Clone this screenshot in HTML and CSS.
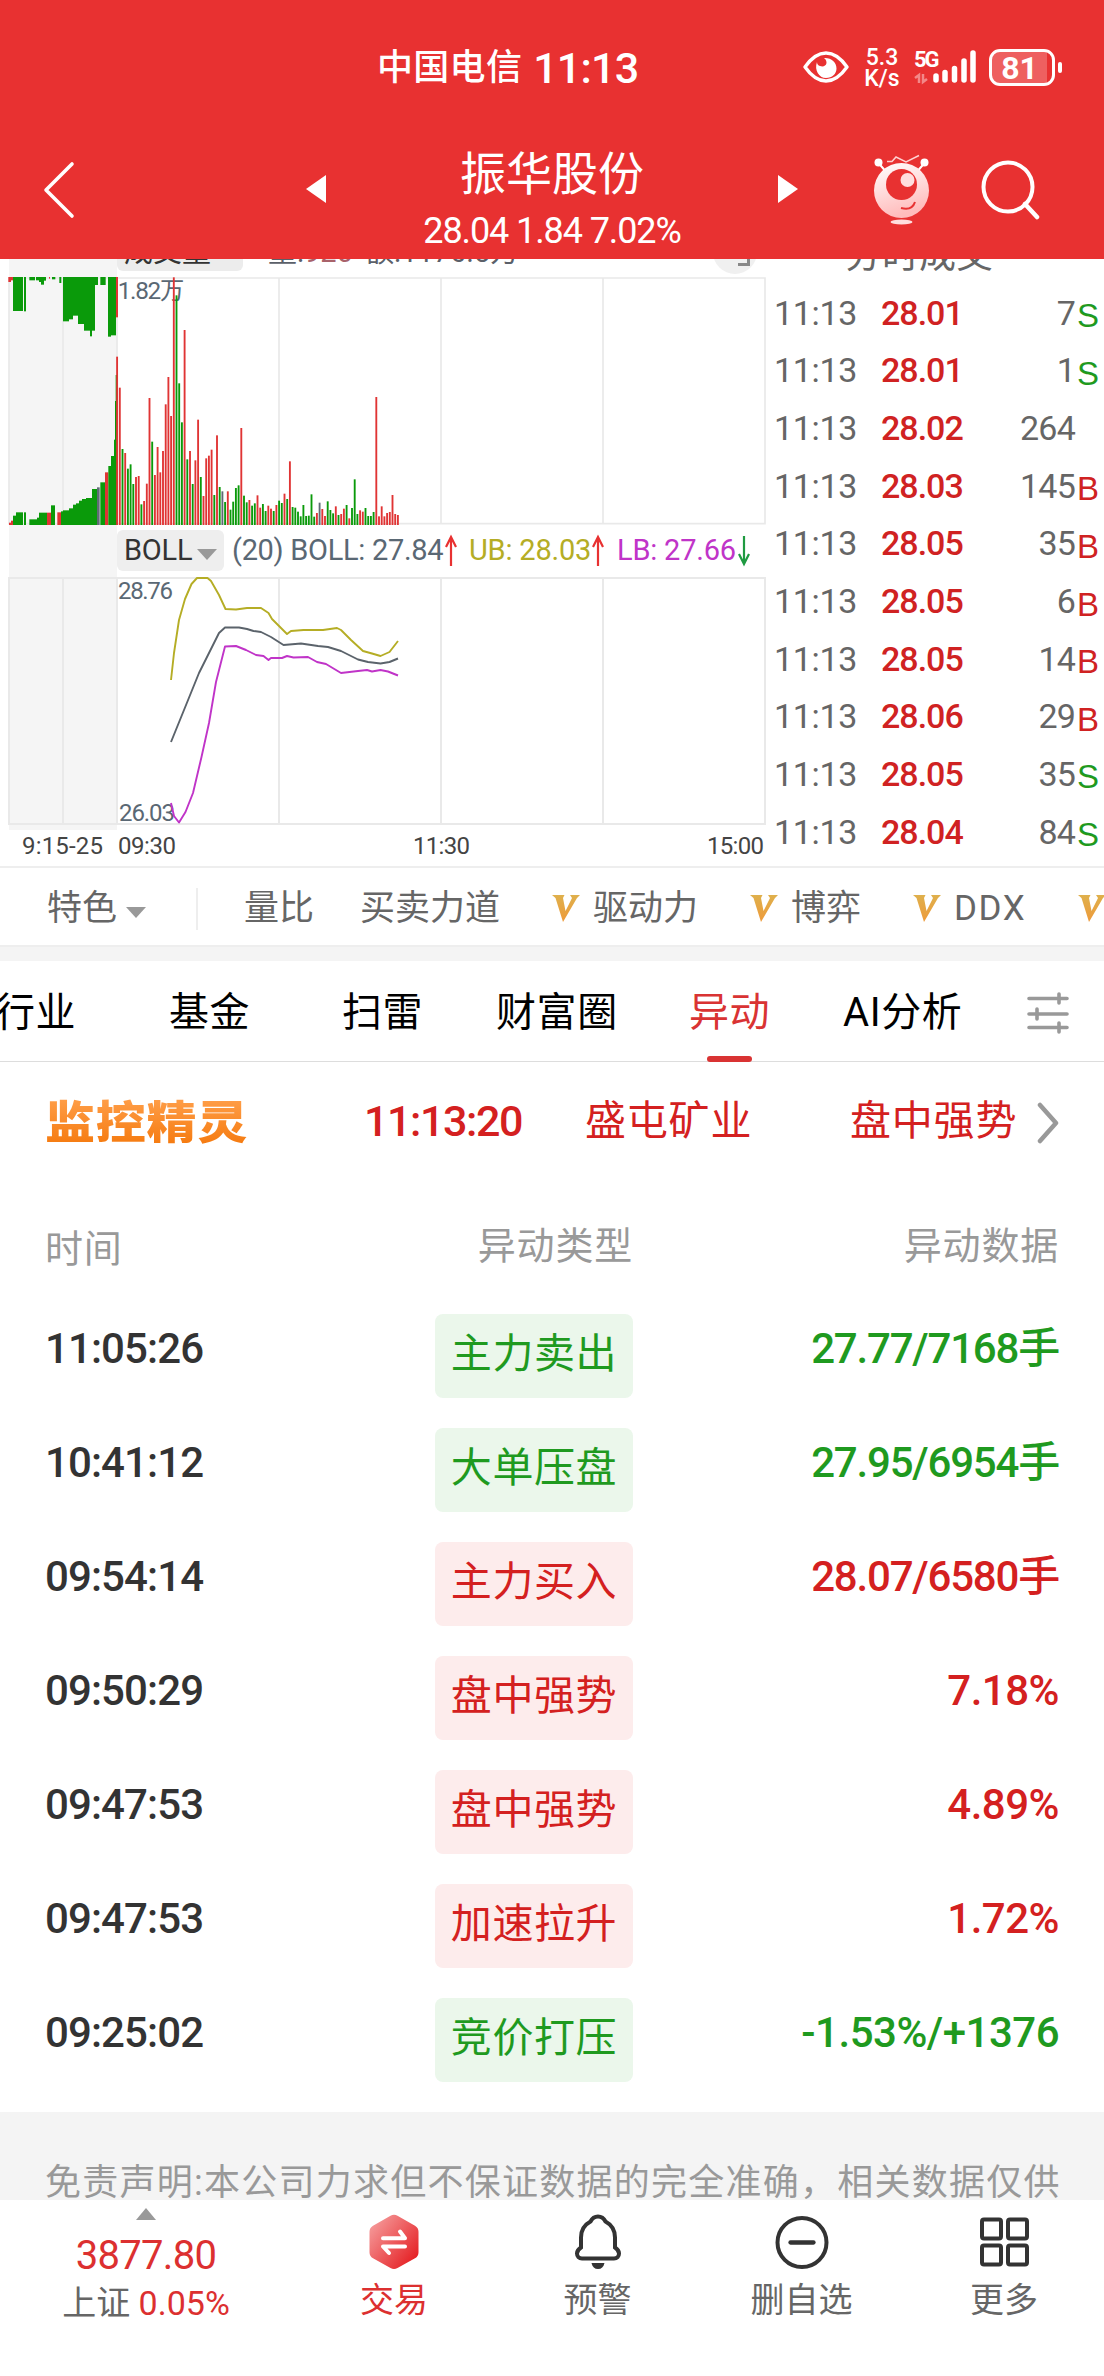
FILE: index.html
```html
<!DOCTYPE html>
<html lang="zh-CN">
<head>
    <meta charset="UTF-8">
    <meta name="viewport" content="width=device-width, initial-scale=1.0">
    <title>振华股份 - 异动</title>
    <link rel="stylesheet" href="styles.css">
</head>
<body>
    <header>
        <div class="status-bar">
            <div class="carrier">中国电信 <span class="clock">11:13</span></div>
            <div class="status-icons">
                <svg width="46" height="32" viewBox="0 0 46 32">
                    <path d="M2 16C9 6 16 2 23 2s14 4 21 14C37 26 30 30 23 30S9 26 2 16z" fill="none" stroke="#fff" stroke-width="3.4" stroke-linejoin="round"/>
                    <path d="M21 7c5 4 2 10-4 8-2-.6-3-2-3-4-3 8 2 16 9 16 6 0 10.500-4 10.500-9.500C33.500 11 28 6.500 21 7z" fill="#fff"/>
                </svg>
                <div class="speed"><span>5.3</span><span>K/s</span></div>
                <svg class="signal" width="64" height="36" viewBox="0 0 64 36">
                    <text x="0" y="17.500" class="net">5G</text>
                    <path d="M5 34V26l-4 3M9 25v8l4-3" stroke="#f38888" stroke-width="2.500" fill="none"/>
                    <g stroke="#fff" stroke-width="5.500" stroke-linecap="round">
                        <path d="M22 27v4M31 23.500v7.500M40.500 19.500V31M50 12v19M59 4v27"/>
                    </g>
                </svg>
                <div class="battery"><span>81</span></div>
            </div>
        </div>
        <div class="title-bar">
            <svg class="back" width="34" height="60" viewBox="0 0 34 60"><path d="M30 4L4 30l26 26" fill="none" stroke="#fff" stroke-width="3.600" stroke-linecap="round" stroke-linejoin="round"/></svg>
            <svg class="prev" width="20" height="28" viewBox="0 0 20 28"><path d="M20 0v28L0 14z" fill="#fff"/></svg>
            <div class="stock">
                <h1>振华股份</h1>
                <p>28.04 1.84 7.02%</p>
            </div>
            <svg class="next" width="20" height="28" viewBox="0 0 20 28"><path d="M0 0v28l20-14z" fill="#fff"/></svg>
            <svg class="robot" width="58" height="72" viewBox="0 0 58 72">
                <defs>
                    <linearGradient id="robotSkin" x1="0" y1="0" x2=".3" y2="1">
                        <stop offset="0" stop-color="#fff"/>
                        <stop offset="1" stop-color="#ffbcbc"/>
                    </linearGradient>
                </defs>
                <path d="M5.500 9l6 7M51.500 9l-6 7" stroke="#fff" stroke-width="2"/>
                <circle cx="5.500" cy="8.500" r="4" fill="#fff"/>
                <circle cx="51.500" cy="8.500" r="4" fill="#fff"/>
                <path d="M14 7.500h5l4-4.500 10 5 13-6.500" fill="none" stroke="#ffd0d0" stroke-width="1.500"/>
                <circle cx="28.500" cy="36.500" r="27.500" fill="url(#robotSkin)"/>
                <circle cx="28.500" cy="30.500" r="15.500" fill="#e83131"/>
                <circle cx="34.500" cy="26" r="7" fill="#ffdede"/>
                <path d="M28 54q11 3 14-6" fill="none" stroke="#e83131" stroke-width="2"/>
                <ellipse cx="28.500" cy="68" rx="11" ry="2.500" fill="#ffdede"/>
            </svg>
            <svg class="search" width="60" height="60" viewBox="0 0 60 60"><circle cx="27" cy="27" r="24.500" fill="none" stroke="#fff" stroke-width="4"/><path d="M44 44l12 13" stroke="#fff" stroke-width="4.500" stroke-linecap="round"/></svg>
        </div>
    </header>

    <section class="market">
        <div class="charts">
            <div class="chart-head">
                <span class="chart-name">成交量</span>
                <span class="vol">量:<b>920</b></span>
                <span class="amount">额:1176.5万</span>
                <span class="expand"></span>
            </div>
            <!-- volume chart: 9:15-9:25 auction on the left, one bar per minute after 9:30 -->
            <svg class="volume-chart" width="770" height="248" viewBox="0 81 2310 744">
                <path d="M27 81h324v744H27z" fill="#f5f5f5"/>
                <path d="M27 84h2268v737H27zM189 84v737M351 84v737M837 84v737M1323 84v737M1809 84v737" fill="none" stroke="#e9e9e9" stroke-width="5"/>
                <text x="353" y="147" textLength="200" class="scale-label">1.82万</text>
                <g id="auction"></g>
                <g id="volume"></g>
            </svg>
            <div class="boll-head">
                <span class="boll-name">BOLL<i class="down"></i></span>
                <span class="boll-mid">(20) BOLL: 27.84</span>
                <svg width="14" height="42" viewBox="0 0 14 42"><path d="M7 36V7M2 17L7 7l5 10" fill="none" stroke="#e83131" stroke-width="2.200"/></svg>
                <span class="boll-ub">UB: 28.03</span>
                <svg width="14" height="42" viewBox="0 0 14 42"><path d="M7 36V7M2 17L7 7l5 10" fill="none" stroke="#e83131" stroke-width="2.200"/></svg>
                <span class="boll-lb">LB: 27.66</span>
                <svg width="14" height="42" viewBox="0 0 14 42"><path d="M7 6v28M2 24l5 10 5-10" fill="none" stroke="#1f9a41" stroke-width="2.200"/></svg>
            </div>
            <svg class="boll-chart" width="770" height="290" viewBox="0 576 770 290">
                <path d="M9 576h108v254H9z" fill="#f5f5f5"/>
                <path d="M9 578h756v246H9zM63 578v246M117 578v246M279 578v246M441 578v246M603 578v246" fill="none" stroke="#e9e9e9" stroke-width="2"/>
                <g class="chart-text">
                    <text x="118" y="599" textLength="55" class="scale">28.76</text>
                    <text x="119" y="821" textLength="56" class="scale">26.03</text>
                    <text x="22" y="854" textLength="81">9:15-25</text>
                    <text x="118" y="854" textLength="58">09:30</text>
                    <text x="413" y="854" textLength="57">11:30</text>
                    <text x="707" y="854" textLength="57">15:00</text>
                </g>
                <g fill="none" stroke-width="1.900" stroke-linejoin="round">
                    <polyline stroke="#b5ad25" points="171,680 174,653 179,620 185,599 191.500,584 197,578 207.500,578 211,581 219,595 225.500,609 236,609.500 247,608 261,608 268.500,613 272,619 287,634 291,631 303.500,630 323,630 337,628 341,630 351,640 363,651 372,653.500 380.500,656 389.500,652 398,641"/>
                    <polyline stroke="#5b636b" points="171,742 184,710 199,673 208,655 219,633 225,627.500 239,627.500 247,629 253.500,631 261,632 271,637 283.500,645 301,643.500 318,646 328,647 341,651 358,659.500 368,662 380.500,663.500 389.500,662 398,658.500"/>
                    <polyline stroke="#c034c8" points="171,803 174,816 179,822.500 185.500,812 193,793 201.500,757 209,723 216,682 225,646.500 236,646 246,650 256,655 263.500,656 268.500,660 271,658 282,658 287,656 293.500,657.500 308,657 317,662 326,664 341,673 358,671 367,670 372,671.500 380.500,670 388,671.500 398,675.500"/>
                </g>
            </svg>
        </div>
        <div class="deals">
            <div class="deals-head"><span>分时成交</span></div>
            <ul>
                <li><span>11:13</span><b>28.01</b><em>7</em><i class="sell">S</i></li>
                <li><span>11:13</span><b>28.01</b><em>1</em><i class="sell">S</i></li>
                <li><span>11:13</span><b>28.02</b><em>264</em><i></i></li>
                <li><span>11:13</span><b>28.03</b><em>145</em><i class="buy">B</i></li>
                <li><span>11:13</span><b>28.05</b><em>35</em><i class="buy">B</i></li>
                <li><span>11:13</span><b>28.05</b><em>6</em><i class="buy">B</i></li>
                <li><span>11:13</span><b>28.05</b><em>14</em><i class="buy">B</i></li>
                <li><span>11:13</span><b>28.06</b><em>29</em><i class="buy">B</i></li>
                <li><span>11:13</span><b>28.05</b><em>35</em><i class="sell">S</i></li>
                <li><span>11:13</span><b>28.04</b><em>84</em><i class="sell">S</i></li>
            </ul>
        </div>
    </section>

    <svg width="0" height="0" class="defs">
        <defs>
            <linearGradient id="gold" x1="0" y1="0" x2="0" y2="1">
                <stop offset="0" stop-color="#dfb04c"/>
                <stop offset="1" stop-color="#ee9a3a"/>
            </linearGradient>
            <symbol id="vip" viewBox="0 0 28 27">
                <path d="M0 0h12.500l-1.500 3 2.500 13L20 3l-2-3h10l-3 3-14 24L3.500 3z" fill="url(#gold)"/>
            </symbol>
        </defs>
    </svg>

    <div class="features">
        <span class="special">特色<i class="down"></i></span>
        <span class="divider"></span>
        <span>量比</span>
        <span>买卖力道</span>
        <span><svg class="vip"><use href="#vip"/></svg>驱动力</span>
        <span><svg class="vip"><use href="#vip"/></svg>博弈</span>
        <span class="ddx"><svg class="vip"><use href="#vip"/></svg>DDX</span>
        <span><svg class="vip"><use href="#vip"/></svg></span>
    </div>

    <nav class="tabs">
        <a>行业</a>
        <a>基金</a>
        <a>扫雷</a>
        <a>财富圈</a>
        <a class="active">异动</a>
        <a>AI分析</a>
        <svg width="42" height="42" viewBox="0 0 42 42"><path d="M2 6.500h38M2 22h38M2 35.500h38M32 2v9M10 17v10M32 31v9" stroke="#999" stroke-width="3.600" stroke-linecap="round"/></svg>
    </nav>

    <div class="monitor">
        <strong>监控精灵</strong>
        <span class="num">11:13:20</span>
        <span>盛屯矿业</span>
        <span>盘中强势</span>
        <svg width="22" height="42" viewBox="0 0 22 42"><path d="M3 3l16 18L3 39" fill="none" stroke="#999" stroke-width="4.500" stroke-linecap="round" stroke-linejoin="round"/></svg>
    </div>

    <div class="moves">
        <div class="row head"><span class="time">时间</span><span class="type">异动类型</span><span class="data">异动数据</span></div>
        <div class="row"><span class="time">11:05:26</span><span class="tag green">主力卖出</span><span class="data green-text">27.77/7168手</span></div>
        <div class="row"><span class="time">10:41:12</span><span class="tag green">大单压盘</span><span class="data green-text">27.95/6954手</span></div>
        <div class="row"><span class="time">09:54:14</span><span class="tag red">主力买入</span><span class="data red-text">28.07/6580手</span></div>
        <div class="row"><span class="time">09:50:29</span><span class="tag red">盘中强势</span><span class="data percent red-text">7.18%</span></div>
        <div class="row"><span class="time">09:47:53</span><span class="tag red">盘中强势</span><span class="data percent red-text">4.89%</span></div>
        <div class="row"><span class="time">09:47:53</span><span class="tag red">加速拉升</span><span class="data percent red-text">1.72%</span></div>
        <div class="row"><span class="time">09:25:02</span><span class="tag green">竞价打压</span><span class="data percent green-text">-1.53%/+1376</span></div>
    </div>

    <div class="disclaimer">免责声明:本公司力求但不保证数据的完全准确，相关数据仅供</div>

    <footer>
        <div class="index">
            <i class="up"></i>
            <b>3877.80</b>
            <p>上证 <span>0.05%</span></p>
        </div>
        <a class="trade">
            <svg width="56" height="56" viewBox="0 0 56 56">
                <defs>
                    <linearGradient id="hex" x1="0" y1=".1" x2=".9" y2=".9">
                        <stop offset="0" stop-color="#f6a0a0"/>
                        <stop offset="1" stop-color="#e51f23"/>
                    </linearGradient>
                </defs>
                <path d="M24.500 1.700q3.500-2 7 0l17.500 10q3.500 2 3.500 6v20.500q0 4-3.500 6L31.500 54q-3.500 2-7 0L7 44.200q-3.500-2-3.500-6V17.700q0-4 3.500-6z" fill="url(#hex)"/>
                <path d="M17 24.300h22L34 17.500M39 32.500H17l6 6.500" fill="none" stroke="#fff" stroke-width="4" stroke-linecap="round" stroke-linejoin="round"/>
            </svg>
            <span>交易</span>
        </a>
        <a>
            <svg width="56" height="56" viewBox="0 0 56 56">
                <path d="M28 2.500c-4 0-6 2-7.500 5-6.500 3.500-9.500 8.500-9.500 16v10c-3 2-4 3.500-4 6 0 3 2 5 5 5h32c3 0 5-2 5-5 0-2.500-1-4-4-6v-10c0-7.500-3-12.500-9.500-16-1.500-3-3.500-5-7.500-5z" fill="none" stroke="#333" stroke-width="4"/>
                <path d="M21.500 49h13c-1 4-3 6-6.500 6s-5.500-2-6.500-6z" fill="#333"/>
            </svg>
            <span>预警</span>
        </a>
        <a>
            <svg width="56" height="56" viewBox="0 0 56 56"><circle cx="28" cy="28.500" r="24.500" fill="none" stroke="#333" stroke-width="4"/><path d="M16.500 28.500h23" stroke="#333" stroke-width="4.300" stroke-linecap="round"/></svg>
            <span>删自选</span>
        </a>
        <a>
            <svg width="56" height="56" viewBox="0 0 56 56"><g fill="none" stroke="#333" stroke-width="4"><rect x="6" y="5.500" width="19" height="19" rx="2"/><rect x="32" y="5.500" width="19" height="19" rx="2"/><rect x="6" y="31.500" width="19" height="19" rx="2"/><rect x="32" y="31.500" width="19" height="19" rx="2"/></g></svg>
            <span>更多</span>
        </a>
    </footer>

    <script src="chart.js"></script>
</body>
</html>
```
FILE: styles.css
```css
* {
    box-sizing: border-box;
}

body {
    margin: 0;
    width: 1104px;
    height: 2376px;
    overflow: hidden;
    display: flex;
    flex-direction: column;
    background-color: #fff;
    color: #333;
    font-family: "Roboto", "Noto Sans CJK SC", sans-serif;
}

svg {
    display: block;
    flex: none;
}

h1, p, ul {
    margin: 0;
    padding: 0;
    font-weight: normal;
}

i, em {
    font-style: normal;
}

.defs {
    position: absolute;
}

/* header */
header {
    height: 259px;
    flex: none;
    background-color: #e83131;
    color: #fff;
}

.status-bar {
    height: 134px;
    padding-left: 377px;
    display: flex;
    align-items: center;
}

.carrier {
    width: 426px;
    padding-top: 2px;
    font-size: 36px;
    line-height: 50px;
    font-weight: 500;
    letter-spacing: 0.3px;
    white-space: nowrap;
    display: flex;
    align-items: center;
}

.clock {
    margin-left: 11px;
    font-size: 43px;
    letter-spacing: -0.8px;
}

.status-icons {
    display: flex;
    align-items: center;
}

.speed {
    width: 36px;
    margin-left: 15px;
    margin-right: 14px;
    padding-top: 2px;
    display: flex;
    flex-direction: column;
    text-align: center;
    font-size: 23px;
    line-height: 21px;
    font-weight: 500;
}

.net {
    font-size: 22px;
    font-weight: 700;
    fill: #fff;
    letter-spacing: -2px;
}

.battery {
    position: relative;
    width: 66px;
    height: 37px;
    margin-left: 11px;
    border: 3px solid #fff;
    border-radius: 11px;
    background: linear-gradient(90deg, #ee6060 55px, #e83131 55px);
    font-size: 32px;
    line-height: 32px;
    font-weight: 700;
    text-align: center;
    padding-right: 5px;
}

.battery::after {
    content: "";
    position: absolute;
    right: -10px;
    top: 10px;
    width: 4px;
    height: 11px;
    border-radius: 2px;
    background-color: #fff;
}

.title-bar {
    height: 125px;
    padding-left: 42px;
    display: flex;
    align-items: flex-start;
}

.back {
    margin-top: 26px;
}

.prev {
    margin-top: 41px;
    margin-left: 230px;
}

.stock {
    width: 452px;
    text-align: center;
}

.stock h1 {
    margin-top: 13px;
    font-size: 46px;
    line-height: 54px;
}

.stock p {
    margin-top: 12px;
    font-size: 36px;
    line-height: 36px;
    letter-spacing: -1.1px;
}

.next {
    margin-top: 41px;
}

.robot {
    margin-top: 20px;
    margin-left: 75px;
}

.search {
    margin-top: 26px;
    margin-left: 50px;
}

/* charts + deal list */
.market {
    height: 607px;
    flex: none;
    display: flex;
}

.charts {
    width: 770px;
}

.chart-head {
    height: 18px;
    overflow: hidden;
    display: flex;
    align-items: flex-end;
    padding-left: 9px;
    background: linear-gradient(90deg, transparent 9px, #f5f5f5 9px, #f5f5f5 117px, transparent 117px);
    font-size: 29px;
    line-height: 30px;
    color: #5b6069;
    white-space: nowrap;
}

.chart-head span {
    flex: none;
}

.chart-name {
    width: 126px;
    height: 42px;
    margin-left: 108px;
    margin-bottom: 6px;
    padding-left: 7px;
    padding-top: 8px;
    border-radius: 6px;
    background-color: #ececec;
    color: #333;
}

.vol, .amount {
    width: 97px;
    margin-left: 25px;
    margin-bottom: 10px;
}

.vol b {
    font-weight: normal;
    color: #a8626a;
}

.amount {
    width: 348px;
    margin-left: 0;
}

.expand {
    width: 44px;
    height: 44px;
    margin-bottom: 3px;
    border-radius: 50%;
    background-color: #f0f0f0;
}

.expand::after {
    content: "";
    display: block;
    width: 9px;
    height: 9px;
    margin: 24px 0 0 25px;
    border-right: 3px solid #888;
    border-bottom: 3px solid #888;
}

.scale-label {
    font-size: 73px;
    fill: #5a6874;
}

.boll-head {
    height: 51px;
    padding: 5px 0 5px 117px;
    display: flex;
    align-items: center;
    background: linear-gradient(90deg, transparent 9px, #f5f5f5 9px, #f5f5f5 117px, transparent 117px);
    font-size: 29px;
    line-height: 41px;
    letter-spacing: -0.2px;
    white-space: nowrap;
}

.boll-name {
    width: 107px;
    padding-left: 7px;
    display: flex;
    align-items: center;
    border-radius: 6px;
    background-color: #eee;
}

.down {
    width: 0;
    height: 0;
    margin-left: 5px;
    margin-top: 7px;
    border: 10px solid transparent;
    border-top: 11px solid #999;
    border-bottom: 0;
}

.boll-mid {
    width: 212px;
    margin-left: 8px;
    letter-spacing: -0.3px;
    color: #5a6874;
}

.boll-ub {
    width: 122px;
    margin-left: 11px;
    color: #b5ad25;
}

.boll-lb {
    width: 120px;
    margin-left: 12px;
    color: #c034c8;
}

.chart-text text {
    font-size: 24px;
    fill: #444;
}

.chart-text .scale {
    fill: #5a6874;
}

.deals {
    width: 334px;
}

.deals-head {
    height: 25px;
    overflow: hidden;
    display: flex;
    align-items: flex-end;
    padding-left: 75px;
    color: #666;
    font-size: 37px;
    line-height: 40px;
}

.deals-head span {
    margin-bottom: 8px;
}

.deals li {
    height: 57.65px;
    padding-left: 4px;
    display: flex;
    align-items: center;
    font-size: 34px;
    color: #666;
}

.deals li span {
    width: 107px;
    letter-spacing: -0.3px;
}

.deals li b {
    width: 84px;
    color: #d02222;
    font-weight: 500;
    letter-spacing: -1px;
}

.deals li em {
    width: 110px;
    text-align: right;
    letter-spacing: -0.8px;
}

.deals li i {
    margin-left: 2px;
    margin-top: 7px;
    font-family: "Liberation Sans", sans-serif;
    font-size: 33px;
}

.buy {
    color: #d02222;
}

.sell {
    color: #1f9a1f;
}

/* feature strip */
.features {
    height: 95px;
    flex: none;
    display: grid;
    grid-template-columns: 149px 48px 116px 192px 198px 163px 165px 40px;
    align-items: center;
    padding-left: 47px;
    padding-bottom: 12px;
    border-top: 2px solid #eee;
    background: linear-gradient(#fff 77px, #eee 77px, #eee 79px, #f4f4f4 79px);
    color: #666;
    font-size: 35px;
    line-height: 50px;
    white-space: nowrap;
    overflow: hidden;
}

.features span {
    display: flex;
    align-items: center;
}

.features .ddx {
    letter-spacing: 1.6px;
}

.special .down {
    margin-left: 9px;
    margin-top: 8px;
}

.features .divider {
    width: 2px;
    height: 42px;
    background-color: #eee;
}

.vip {
    width: 28px;
    height: 27px;
    margin-right: 13px;
}

/* tabs */
.tabs {
    height: 101px;
    flex: none;
    display: grid;
    grid-template-columns: 174px 173px 154px 193px 154px 184px 44px;
    align-items: center;
    margin-left: -5px;
    padding-top: 3px;
    border-bottom: 1px solid #ddd;
    color: #000;
    font-size: 40px;
    line-height: 60px;
    letter-spacing: 0.6px;
    white-space: nowrap;
}

.tabs .active {
    position: relative;
    color: #d93333;
}

.tabs .active::after {
    content: "";
    position: absolute;
    left: 18px;
    bottom: -19px;
    width: 45px;
    height: 6px;
    border-radius: 3px;
    background-color: #d93333;
}

/* monitor row */
.monitor {
    height: 118px;
    flex: none;
    display: flex;
    align-items: center;
    padding-left: 45px;
    color: #d42020;
    font-size: 41px;
    line-height: 60px;
    letter-spacing: 0.8px;
    white-space: nowrap;
}

.monitor strong {
    width: 319px;
    margin-top: 6px;
    font-size: 50px;
    font-weight: 900;
    transform: scaleY(.9);
    background: linear-gradient(#ff9f4a, #f47608);
    -webkit-background-clip: text;
    background-clip: text;
    color: transparent;
}

.monitor .num {
    width: 221px;
    font-size: 43px;
    font-weight: 500;
    letter-spacing: -1.4px;
}

.monitor span:nth-of-type(2) {
    width: 265px;
}

.monitor svg {
    margin-left: 20px;
    margin-top: 4px;
}

/* moves table */
.moves {
    height: 932px;
    flex: none;
    padding: 0 45px;
}

.row {
    height: 114px;
    display: grid;
    grid-template-columns: 390px 198px 1fr;
    font-size: 42px;
    line-height: 60px;
}

.row .time, .row .data {
    padding-top: 5px;
    font-weight: 500;
    letter-spacing: -0.9px;
}

.row .data {
    text-align: right;
    letter-spacing: -1.2px;
}

.row .percent {
    letter-spacing: -0.5px;
}

.tag {
    height: 84px;
    padding-top: 10px;
    border-radius: 8px;
    text-align: center;
    font-size: 41px;
    letter-spacing: 0.6px;
}

.green {
    background-color: #ebf7eb;
    color: #1f9a1f;
}

.red {
    background-color: #fdecec;
    color: #d42020;
}

.green-text {
    color: #1f9a1f;
}

.red-text {
    color: #d42020;
}

.row.head {
    height: 134px;
    padding-top: 36px;
    font-size: 38px;
    color: #999;
}

.row.head span {
    padding-top: 0;
    font-weight: normal;
    letter-spacing: 0.8px;
}

.row.head .time {
    padding-top: 3px;
}

.row.head .type {
    text-align: right;
}

/* disclaimer and bottom bar */
.disclaimer {
    height: 88px;
    flex: none;
    padding: 46px 0 0 45px;
    overflow: hidden;
    background-color: #f4f4f4;
    color: #999;
    font-size: 36px;
    line-height: 50px;
    letter-spacing: 1.250px;
    white-space: nowrap;
}

footer {
    height: 176px;
    flex: none;
    display: grid;
    grid-template-columns: 292px 204px 203px 205px 200px;
    background-color: #fff;
    color: #666;
    font-size: 34px;
    line-height: 44px;
    text-align: center;
}

footer a {
    padding-top: 14px;
    display: flex;
    flex-direction: column;
    align-items: center;
    gap: 8px;
}

.index {
    display: flex;
    flex-direction: column;
    align-items: center;
}

.index .up {
    margin-top: 8px;
    border: 10px solid transparent;
    border-bottom: 12px solid #999;
    border-top: 0;
}

.index b {
    margin-top: 14px;
    font-size: 40px;
    font-weight: normal;
    letter-spacing: -0.7px;
    color: #dc3030;
}

.index p {
    margin-top: 3px;
}

.index p span, .trade span {
    color: #dc3030;
}
```
FILE: chart.js
```javascript
// tops of the bars, r = up, g = down, n = flat
var volume = [
    'r320', 'r413', 'g597', 'r609', 'g656', 'g643', 'g702', 'r681', 'r678', 'g763',
    'r753', 'r701', 'r444', 'g575', 'r675', 'r591', 'r667', 'r603', 'r463', 'r381',
    'r498', 'r82', 'g136', 'g400', 'g517', 'r240', 'g628', 'r603', 'g702', 'r631',
    'r509', 'g681', 'r738', 'r625', 'r617', 'r599', 'g735', 'r556', 'g711', 'n724',
    'g756', 'r724', 'g779', 'g755', 'g714', 'g706', 'r534', 'g737', 'g757', 'r750',
    'g767', 'g760', 'r736', 'r773', 'g762', 'g783', 'r767', 'r776', 'g783', 'r765',
    'g752', 'g759', 'r731', 'g747', 'r634', 'g771', 'g773', 'g785', 'g799', 'g765',
    'g798', 'g797', 'g733', 'g800', 'r789', 'n758', 'r777', 'r798', 'g754', 'g780',
    'g790', 'r769', 'g795', 'r792', 'r776', 'g765', 'r805', 'g774', 'g688', 'g792',
    'r781', 'r785', 'g774', 'g798', 'g798', 'g786', 'r441', 'r799', 'r769', 'r799',
    'r789', 'r786', 'r735', 'r792', 'r795'
];

// auction: [colour, x from, x to, y]
var matched = [
    ['r', 27, 33, 818], ['r', 33, 39, 812], ['g', 39, 48, 797], ['g', 48, 69, 787], ['g', 72, 78, 787],
    ['g', 88, 111, 808], ['g', 111, 117, 803], ['g', 117, 141, 788], ['r', 141, 153, 788], ['g', 153, 165, 766],
    ['r', 172, 183, 787], ['g', 183, 189, 784], ['g', 189, 207, 781], ['g', 207, 219, 775], ['g', 219, 228, 764],
    ['g', 228, 237, 760], ['g', 237, 246, 752], ['g', 246, 258, 747], ['g', 258, 276, 744], ['g', 276, 291, 717],
    ['n', 291, 299, 712], ['g', 301, 315, 697], ['r', 315, 325, 667], ['g', 325, 333, 648], ['g', 333, 342, 618],
    ['g', 342, 345, 569], ['g', 345, 348, 453], ['g', 347, 351, 375]
];
var unmatched = [
    ['r', 25, 33, 96], ['r', 33, 39, 91], ['g', 39, 69, 183], ['g', 72, 78, 184], ['g', 88, 105, 91],
    ['g', 108, 117, 91], ['g', 117, 123, 96], ['g', 123, 132, 104], ['g', 132, 138, 92], ['r', 147, 150, 86],
    ['g', 156, 166, 88], ['g', 178, 184, 99], ['g', 189, 207, 214], ['g', 207, 219, 208], ['g', 219, 234, 197],
    ['g', 234, 252, 222], ['g', 252, 270, 242], ['g', 270, 276, 259], ['g', 276, 285, 242], ['g', 285, 294, 105],
    ['g', 301, 317, 105], ['g', 324, 333, 260], ['g', 333, 348, 256], ['r', 348, 354, 202]
];

var colors = { r: '#e03434', g: '#0a9a0a', n: '#5f6b75' };
var BASE = 825;
var TOP = 81;

function addBar(parent, color, x, y, width, height) {
    var rect = document.createElementNS('http://www.w3.org/2000/svg', 'rect');
    rect.setAttribute('x', x);
    rect.setAttribute('y', y);
    rect.setAttribute('width', width);
    rect.setAttribute('height', height);
    rect.setAttribute('fill', colors[color]);
    parent.appendChild(rect);
}

var volumeGroup = document.getElementById('volume');
volume.forEach(function (bar, i) {
    var y = Number(bar.slice(1));
    addBar(volumeGroup, bar[0], 348.5 + i * 8.1, y, 5.6, BASE - y);
});

var auctionGroup = document.getElementById('auction');
matched.forEach(function (b) {
    addBar(auctionGroup, b[0], b[1], b[3], b[2] - b[1], BASE - b[3]);
});
unmatched.forEach(function (b) {
    addBar(auctionGroup, b[0], b[1], TOP, b[2] - b[1], b[3] - TOP);
});
```
